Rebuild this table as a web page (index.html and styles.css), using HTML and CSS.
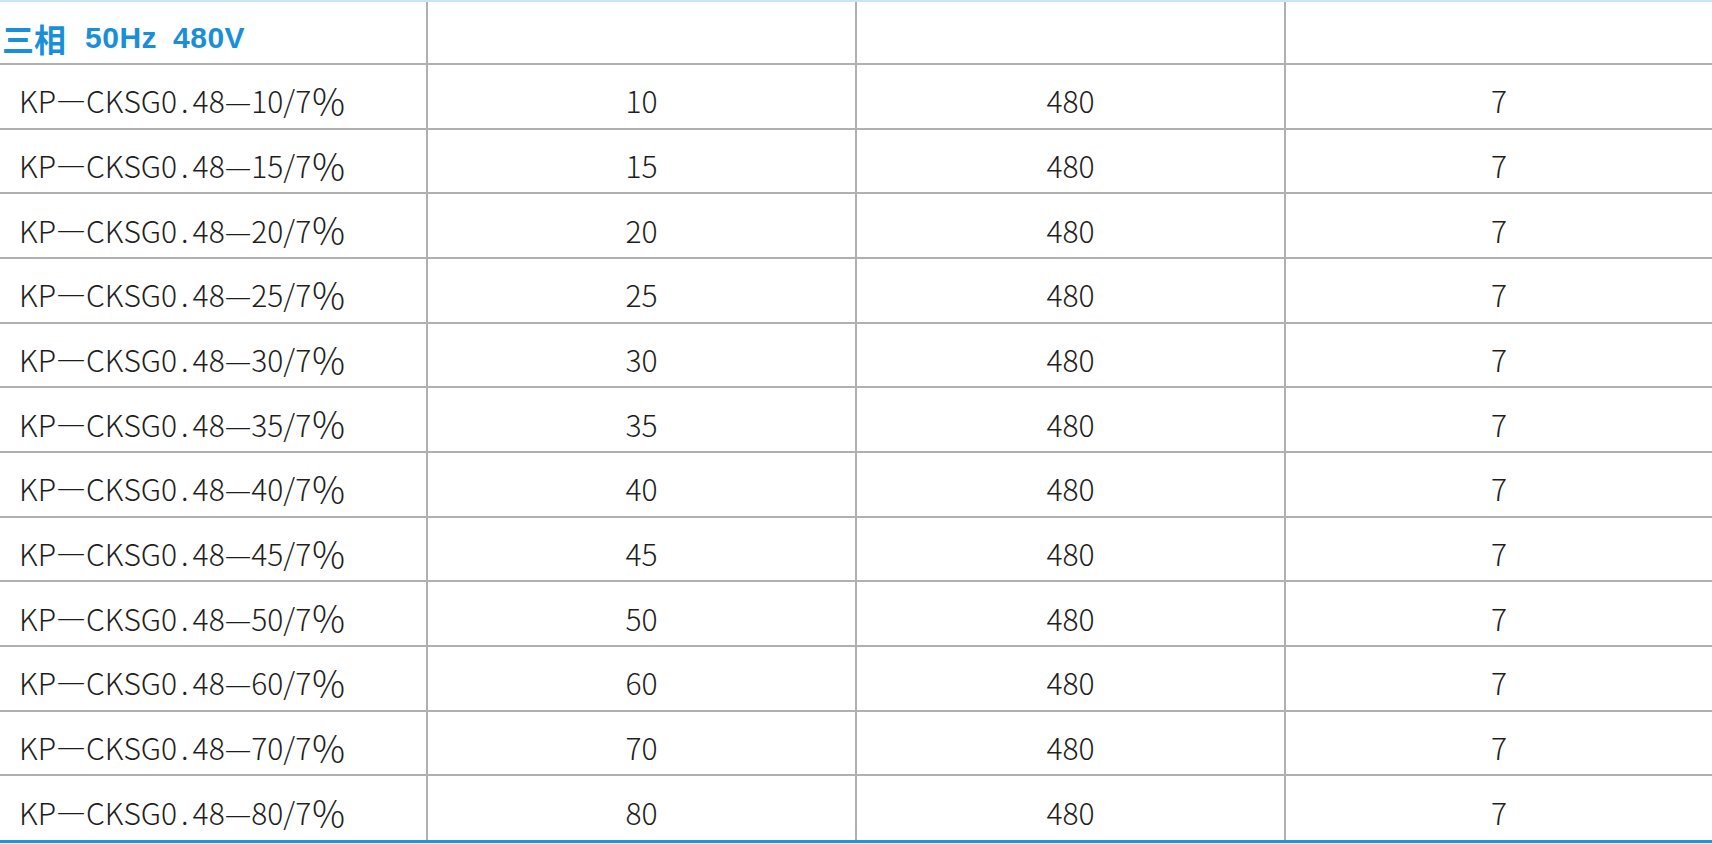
FILE: index.html
```html
<!DOCTYPE html>
<html lang="zh-CN">
<head>
<meta charset="utf-8">
<title>三相 50Hz 480V</title>
<link rel="stylesheet" href="styles.css">
</head>
<body>
<div class="spec-table">
  <div class="row head">
    <div class="cell first"><span class="cn">三相</span><span class="en hz">50Hz</span><span class="en">480V</span></div>
    <div class="cell"></div>
    <div class="cell"></div>
    <div class="cell last"></div>
  </div>
  <div class="row"><div class="cell first">KP—CKSG0<span class="dot">.</span>48—10/7<span class="pct">％</span></div><div class="cell">10</div><div class="cell">480</div><div class="cell last">7</div></div>
  <div class="row"><div class="cell first">KP—CKSG0<span class="dot">.</span>48—15/7<span class="pct">％</span></div><div class="cell">15</div><div class="cell">480</div><div class="cell last">7</div></div>
  <div class="row"><div class="cell first">KP—CKSG0<span class="dot">.</span>48—20/7<span class="pct">％</span></div><div class="cell">20</div><div class="cell">480</div><div class="cell last">7</div></div>
  <div class="row"><div class="cell first">KP—CKSG0<span class="dot">.</span>48—25/7<span class="pct">％</span></div><div class="cell">25</div><div class="cell">480</div><div class="cell last">7</div></div>
  <div class="row"><div class="cell first">KP—CKSG0<span class="dot">.</span>48—30/7<span class="pct">％</span></div><div class="cell">30</div><div class="cell">480</div><div class="cell last">7</div></div>
  <div class="row"><div class="cell first">KP—CKSG0<span class="dot">.</span>48—35/7<span class="pct">％</span></div><div class="cell">35</div><div class="cell">480</div><div class="cell last">7</div></div>
  <div class="row"><div class="cell first">KP—CKSG0<span class="dot">.</span>48—40/7<span class="pct">％</span></div><div class="cell">40</div><div class="cell">480</div><div class="cell last">7</div></div>
  <div class="row"><div class="cell first">KP—CKSG0<span class="dot">.</span>48—45/7<span class="pct">％</span></div><div class="cell">45</div><div class="cell">480</div><div class="cell last">7</div></div>
  <div class="row"><div class="cell first">KP—CKSG0<span class="dot">.</span>48—50/7<span class="pct">％</span></div><div class="cell">50</div><div class="cell">480</div><div class="cell last">7</div></div>
  <div class="row"><div class="cell first">KP—CKSG0<span class="dot">.</span>48—60/7<span class="pct">％</span></div><div class="cell">60</div><div class="cell">480</div><div class="cell last">7</div></div>
  <div class="row"><div class="cell first">KP—CKSG0<span class="dot">.</span>48—70/7<span class="pct">％</span></div><div class="cell">70</div><div class="cell">480</div><div class="cell last">7</div></div>
  <div class="row final"><div class="cell first">KP—CKSG0<span class="dot">.</span>48—80/7<span class="pct">％</span></div><div class="cell">80</div><div class="cell">480</div><div class="cell last">7</div></div>
</div>
</body>
</html>
```

FILE: styles.css
```css
html, body {
  margin: 0;
  padding: 0;
  background: #ffffff;
}

body {
  width: 1712px;
  height: 844px;
  overflow: hidden;
  font-family: "Noto Sans CJK SC", "Noto Sans", sans-serif;
  color: #1e1e1e;
}

.spec-table {
  display: flex;
  flex-direction: column;
  border-top: 2px solid #c6e6f8;
  border-bottom: 3px solid #2494d9;
}

.row {
  display: grid;
  grid-template-columns: 428px 429px 429px 1fr;
  height: 64.67px;
  box-sizing: border-box;
  border-bottom: 2px solid #b0b0b0;
}

.row.head {
  height: 63px;
}

.row.final {
  border-bottom: none;
  height: 64px;
}

.cell {
  display: flex;
  align-items: center;
  justify-content: center;
  border-right: 2px solid #b0b0b0;
  padding-top: 8px;
  box-sizing: border-box;
  font-size: 30px;
  font-weight: 300;
  line-height: 1;
  white-space: nowrap;
}

.cell.last {
  border-right: none;
}

.cell.first {
  justify-content: flex-start;
  padding-left: 19px;
}

.dot {
  margin: 0 4px;
}

.pct {
  font-size: 1.22em;
  margin-left: -1px;
  position: relative;
  top: 1px;
}

.head .cell.first {
  padding-left: 2px;
  padding-top: 10px;
  color: #1a8fd9;
  font-weight: 700;
}

.head .cn {
  font-family: "Noto Sans CJK SC", sans-serif;
  font-size: 32px;
  font-weight: 700;
}

.head .en {
  font-family: "Liberation Sans", Arial, sans-serif;
  font-size: 30px;
  font-weight: 700;
  letter-spacing: 0.5px;
  margin-left: 16px;
}

.head .en.hz {
  margin-left: 19px;
}
```
